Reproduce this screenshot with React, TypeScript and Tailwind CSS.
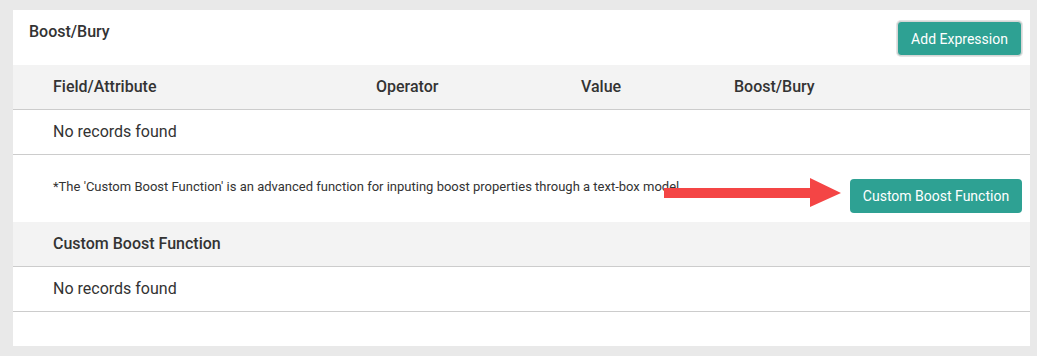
import React from "react";

export default function App() {
  return (
    <div className="w-[1037px] h-[356px] bg-[#e9e9e9] pt-[10px] pl-[13px] font-['Roboto',sans-serif] text-[#333]">
      <div className="relative w-[1017px] h-[336px] bg-white flex flex-col">
        <div className="h-[55px] flex items-start justify-between">
          <div className="pl-[16px] pt-[13px] text-[16px] font-medium leading-[18px] text-[#333]">Boost/Bury</div>
          <button className="mt-[11px] mr-[8px] h-[35px] w-[125px] rounded-[4px] bg-[#2ea193] text-white text-[14px] leading-none border border-[#d6d6d6] ring-1 ring-[#e4e4e4]">
            Add Expression
          </button>
        </div>
        <div className="h-[45px] bg-[#f3f3f3] border-b border-[#cccccc] flex items-center text-[16px] font-medium text-[#333]">
          <div className="pl-[40px] w-[363px]">Field/Attribute</div>
          <div className="w-[205px]">Operator</div>
          <div className="w-[153px]">Value</div>
          <div>Boost/Bury</div>
        </div>
        <div className="h-[45px] border-b border-[#cccccc] flex items-center pl-[40px] text-[16px] text-[#333]">
          No records found
        </div>
        <div className="h-[67px] flex items-center justify-between">
          <div className="pl-[40px] text-[13px] text-[#333] -mt-[3px]">
            *The 'Custom Boost Function' is an advanced function for inputing boost properties through a text-box model
          </div>
          <button className="mr-[8px] mt-[15px] h-[34px] w-[172px] rounded-[4px] bg-[#2ea193] text-white text-[14px] leading-none">
            Custom Boost Function
          </button>
        </div>
        <div className="h-[45px] bg-[#f3f3f3] border-b border-[#cccccc] flex items-center pl-[40px] text-[16px] font-medium text-[#333]">
          Custom Boost Function
        </div>
        <div className="h-[45px] border-b border-[#cccccc] flex items-center pl-[40px] text-[16px] text-[#333]">
          No records found
        </div>
        <svg className="absolute left-[651px] top-[168px]" width="178" height="30" viewBox="0 0 178 30">
          <polygon points="0,10 146,10 146,0 177,15 146,29 146,20 0,20" fill="#f44545" />
        </svg>
      </div>
    </div>
  );
}
